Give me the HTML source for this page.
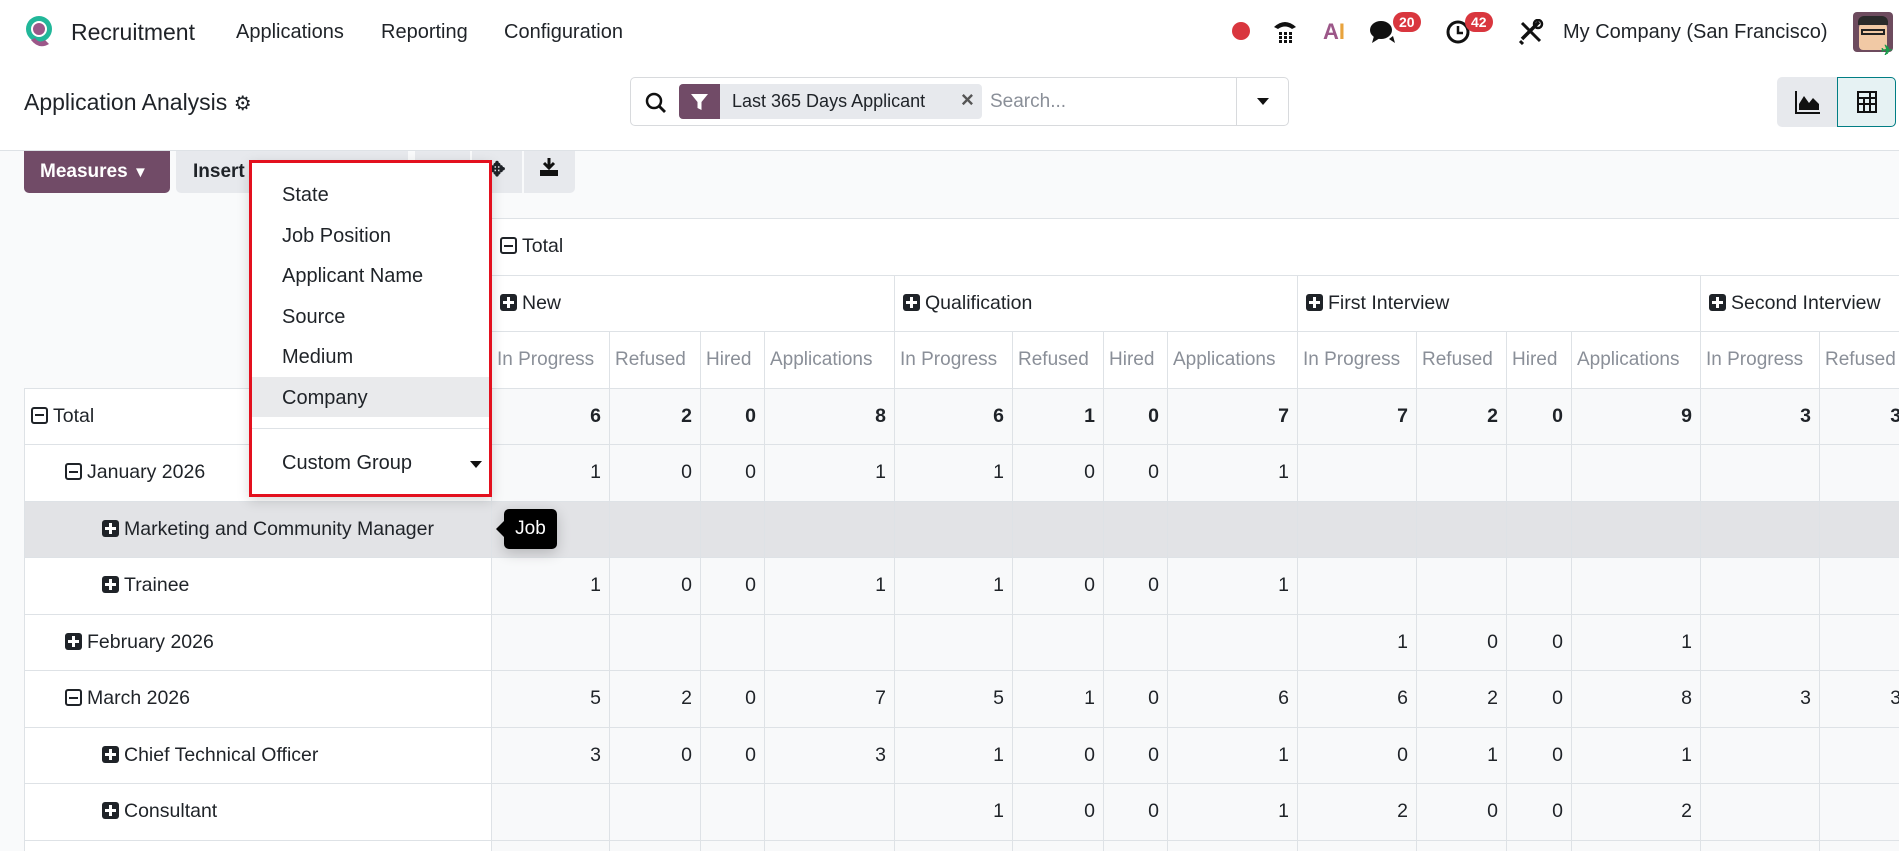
<!DOCTYPE html>
<html style="width:1899px;height:851px;overflow:hidden"><head><meta charset="utf-8"><style>
*{box-sizing:border-box;margin:0;padding:0}
body{width:1899px;height:851px;overflow:hidden;background:#f9fafb;font-family:"Liberation Sans",sans-serif;color:#1f2328;position:relative}
.abs{position:absolute}
#nav{left:0;top:0;width:1899px;height:62px;background:#fff}
#cp{left:0;top:62px;width:1899px;height:89px;background:#fff;border-bottom:1px solid #dee2e6}
.navt{position:absolute;top:21px;font-size:20px;color:#1f2328}
.badge{position:absolute;background:#d9363e;color:#fff;font-size:14px;font-weight:bold;border-radius:10px;padding:2px 6px;line-height:16px}
table{border-collapse:collapse;table-layout:fixed;font-size:19.5px}
td{height:56.5px;border:1px solid #dee2e6;padding:0 8px;white-space:nowrap;overflow:hidden}
td.n{text-align:right;background:#f8f9fa}
td.m{color:#8a8f98;background:#fff;padding:0 5px;font-size:19px}
td.h{background:#fff}
td.l{background:#fff}
tr.hl td{background:#e2e3e6}
.pl,.mi{display:inline-block;width:17px;height:17px;border-radius:3px;vertical-align:-2px;margin-right:5px;position:relative}
.pl{background:#1f2328}
.pl:before{content:"";position:absolute;left:3px;top:7px;width:11px;height:3px;background:#fff}
.pl:after{content:"";position:absolute;left:7px;top:3px;width:3px;height:11px;background:#fff}
.mi{border:2px solid #1f2328}
.mi:before{content:"";position:absolute;left:2px;top:5.5px;width:9px;height:2px;background:#1f2328}
.dd{font-size:20px;position:absolute;left:30px}
</style></head><body>
<div id="nav" class="abs">
 <svg class="abs" style="left:23px;top:14px" width="32" height="36" viewBox="0 0 32 36"><circle cx="16" cy="15" r="13" fill="#21b799"/><circle cx="16" cy="15" r="8" fill="#fff"/><circle cx="16" cy="15" r="6" fill="#9c5789"/><path d="M8 26 Q16 36 26 30 L22 26 Q16 30 12 24Z" fill="#9c5789"/></svg>
 <div class="navt" style="left:71px;font-size:23px;top:19px">Recruitment</div>
 <div class="navt" style="left:236px">Applications</div>
 <div class="navt" style="left:381px">Reporting</div>
 <div class="navt" style="left:504px">Configuration</div>
 <div class="abs" style="left:1232px;top:22px;width:18px;height:18px;border-radius:50%;background:#d9363e"></div>
 <svg class="abs" style="left:1272px;top:17px" width="26" height="28" viewBox="0 0 26 28"><path d="M2 10 Q13 0 24 10 L20 12 Q13 7 6 12Z" fill="#111"/><g fill="#111"><rect x="7" y="15" width="3" height="3"/><rect x="12" y="15" width="3" height="3"/><rect x="17" y="15" width="3" height="3"/><rect x="7" y="19" width="3" height="3"/><rect x="12" y="19" width="3" height="3"/><rect x="17" y="19" width="3" height="3"/><rect x="7" y="23" width="3" height="3"/><rect x="12" y="23" width="3" height="3"/><rect x="17" y="23" width="3" height="3"/></g></svg>
 <div class="abs" style="left:1323px;top:19px;font-size:22px;font-weight:bold;color:#9c5789">A<span style="color:#e8a33d">I</span></div>
 <svg class="abs" style="left:1369px;top:19px" width="30" height="26" viewBox="0 0 30 26"><ellipse cx="12" cy="11" rx="11" ry="9" fill="#111"/><path d="M5 17 L3 24 L11 19Z" fill="#111"/><path d="M20 20 L26 24 L24 17Z" fill="#111"/></svg>
 <div class="badge" style="left:1393px;top:12px">20</div>
 <svg class="abs" style="left:1446px;top:19px" width="26" height="26" viewBox="0 0 26 26"><circle cx="12" cy="13" r="10" fill="none" stroke="#111" stroke-width="3"/><path d="M12 7v7h5" stroke="#111" stroke-width="2.5" fill="none"/></svg>
 <div class="badge" style="left:1465px;top:12px">42</div>
 <svg class="abs" style="left:1518px;top:19px" width="26" height="26" viewBox="0 0 26 26"><path d="M4 4 L22 22" stroke="#111" stroke-width="3"/><path d="M21 3 L4 20" stroke="#111" stroke-width="3.5"/><circle cx="20" cy="5" r="4" fill="none" stroke="#111" stroke-width="2.5"/><path d="M2 22 L5 25" stroke="#111" stroke-width="3"/></svg>
 <div class="navt" style="left:1563px">My Company (San Francisco)</div>
 <div class="abs" style="left:1853px;top:12px;width:40px;height:40px;border-radius:4px;background:#6d4b5e"><div style="position:absolute;left:6px;top:8px;width:28px;height:30px;background:#f1c9a5;border-radius:8px 8px 4px 4px"></div><div style="position:absolute;left:5px;top:4px;width:30px;height:9px;background:#2a2a2a;border-radius:6px 6px 0 0"></div><div style="position:absolute;left:8px;top:17px;width:24px;height:6px;border:2px solid #222"></div><div style="position:absolute;left:28px;top:30px;color:#1a9a4a;font-size:14px;font-weight:bold">✈</div></div>
</div>
<div id="cp" class="abs">
 <div class="abs" style="left:24px;top:27px;font-size:23px">Application Analysis <span style="font-size:20px">⚙</span></div>
 <div class="abs" style="left:630px;top:15px;width:659px;height:49px;border:1px solid #d8dadd;border-radius:5px;background:#fff">
  <svg class="abs" style="left:14px;top:14px" width="22" height="22" viewBox="0 0 22 22"><circle cx="9" cy="9" r="7" fill="none" stroke="#111" stroke-width="2.5"/><path d="M14 14l6 6" stroke="#111" stroke-width="2.8"/></svg>
  <div class="abs" style="left:48px;top:6px;width:303px;height:35px;background:#e7e9ed;border-radius:4px"></div>
  <div class="abs" style="left:48px;top:6px;width:41px;height:35px;background:#714b67;border-radius:4px 0 0 4px"><svg style="position:absolute;left:11px;top:9px" width="19" height="18" viewBox="0 0 19 18"><path d="M1 1h17l-6.5 8v8l-4-2V9Z" fill="#fff"/></svg></div>
  <div class="abs" style="left:101px;top:13px;font-size:18px">Last 365 Days Applicant</div>
  <div class="abs" style="left:330px;top:9px;font-size:22px;color:#555;font-weight:bold">×</div>
  <div class="abs" style="left:359px;top:13px;font-size:19px;color:#8a8f98">Search...</div>
  <div class="abs" style="left:605px;top:0;width:1px;height:47px;background:#d8dadd"></div>
  <div class="abs" style="left:626px;top:20px;width:0;height:0;border-left:6px solid transparent;border-right:6px solid transparent;border-top:7px solid #111"></div>
 </div>
 <div class="abs" style="left:1777px;top:15px;width:119px;height:50px;border-radius:5px;background:#e7e9ed"></div>
 <div class="abs" style="left:1837px;top:15px;width:59px;height:50px;border:1px solid #017e84;border-radius:0 5px 5px 0;background:#e6f2f3"></div>
 <svg class="abs" style="left:1795px;top:28px" width="26" height="24" viewBox="0 0 26 24"><path d="M1 1v22h24" stroke="#111" stroke-width="2" fill="none"/><path d="M4 20 L4 14 L9 6 L14 13 L18 8 L24 14 L24 20Z" fill="#111"/></svg>
 <svg class="abs" style="left:1856px;top:28px" width="22" height="24" viewBox="0 0 22 24"><g fill="none" stroke="#111" stroke-width="2"><rect x="2" y="2" width="18" height="20"/><path d="M2 8h18M2 14h18M8 8v14M14 2v20"/></g></svg>
</div>
<div class="abs" style="left:24px;top:151px;width:146px;height:42px;background:#714b67;border-radius:0 0 5px 5px;color:#fff;font-size:19px;font-weight:bold;padding:10px 0 0 16px">Measures <span style="font-size:15px">▼</span></div>
<div class="abs" style="left:176px;top:151px;width:232px;height:42px;background:#e7e9ed;border-radius:0 0 5px 5px;font-size:19px;font-weight:bold;padding:10px 0 0 17px">Insert</div>
<div class="abs" style="left:415px;top:151px;width:55px;height:42px;background:#e7e9ed"></div>
<div class="abs" style="left:472px;top:151px;width:50px;height:42px;background:#e7e9ed;font-size:20px;font-weight:bold;text-align:center;padding-top:6px">✥</div>
<div class="abs" style="left:524px;top:151px;width:51px;height:42px;background:#e7e9ed;border-radius:0 0 5px 0"><svg style="position:absolute;left:15px;top:6px" width="20" height="20" viewBox="0 0 20 20"><path d="M10 1v9M5 6l5 5 5-5" stroke="#111" stroke-width="3" fill="none"/><rect x="1" y="13" width="18" height="6" fill="#111"/></svg></div>

<div class="abs" style="left:24px;top:218px;width:1875px;height:633px;overflow:hidden">
<table style="width:1885px">
<colgroup><col style="width:467px"><col style="width:118px"><col style="width:91px"><col style="width:64px"><col style="width:130px"><col style="width:118px"><col style="width:91px"><col style="width:64px"><col style="width:130px"><col style="width:119px"><col style="width:90px"><col style="width:65px"><col style="width:129px"><col style="width:119px"><col style="width:90px"></colgroup>
<tr><td rowspan="3" style="border:none;border-right:1px solid #dee2e6;background:#f9fafb"></td><td class="h" colspan="14"><span class="mi"></span>Total</td></tr>
<tr><td class="h" colspan="4"><span class="pl"></span>New</td><td class="h" colspan="4"><span class="pl"></span>Qualification</td><td class="h" colspan="4"><span class="pl"></span>First Interview</td><td class="h" colspan="2"><span class="pl"></span>Second Interview</td></tr>
<tr><td class="m">In Progress</td><td class="m">Refused</td><td class="m">Hired</td><td class="m">Applications</td><td class="m">In Progress</td><td class="m">Refused</td><td class="m">Hired</td><td class="m">Applications</td><td class="m">In Progress</td><td class="m">Refused</td><td class="m">Hired</td><td class="m">Applications</td><td class="m">In Progress</td><td class="m">Refused</td></tr>
<tr style="font-weight:bold"><td class="l" style="font-weight:normal;padding-left:6px"><span class="mi"></span>Total</td><td class="n">6</td><td class="n">2</td><td class="n">0</td><td class="n">8</td><td class="n">6</td><td class="n">1</td><td class="n">0</td><td class="n">7</td><td class="n">7</td><td class="n">2</td><td class="n">0</td><td class="n">9</td><td class="n">3</td><td class="n">3</td></tr>
<tr><td class="l" style="padding-left:40px"><span class="mi"></span>January 2026</td><td class="n">1</td><td class="n">0</td><td class="n">0</td><td class="n">1</td><td class="n">1</td><td class="n">0</td><td class="n">0</td><td class="n">1</td><td class="n"></td><td class="n"></td><td class="n"></td><td class="n"></td><td class="n"></td><td class="n"></td></tr>
<tr class="hl"><td class="l" style="padding-left:77px"><span class="pl"></span>Marketing and Community Manager</td><td class="n"></td><td class="n"></td><td class="n"></td><td class="n"></td><td class="n"></td><td class="n"></td><td class="n"></td><td class="n"></td><td class="n"></td><td class="n"></td><td class="n"></td><td class="n"></td><td class="n"></td><td class="n"></td></tr>
<tr><td class="l" style="padding-left:77px"><span class="pl"></span>Trainee</td><td class="n">1</td><td class="n">0</td><td class="n">0</td><td class="n">1</td><td class="n">1</td><td class="n">0</td><td class="n">0</td><td class="n">1</td><td class="n"></td><td class="n"></td><td class="n"></td><td class="n"></td><td class="n"></td><td class="n"></td></tr>
<tr><td class="l" style="padding-left:40px"><span class="pl"></span>February 2026</td><td class="n"></td><td class="n"></td><td class="n"></td><td class="n"></td><td class="n"></td><td class="n"></td><td class="n"></td><td class="n"></td><td class="n">1</td><td class="n">0</td><td class="n">0</td><td class="n">1</td><td class="n"></td><td class="n"></td></tr>
<tr><td class="l" style="padding-left:40px"><span class="mi"></span>March 2026</td><td class="n">5</td><td class="n">2</td><td class="n">0</td><td class="n">7</td><td class="n">5</td><td class="n">1</td><td class="n">0</td><td class="n">6</td><td class="n">6</td><td class="n">2</td><td class="n">0</td><td class="n">8</td><td class="n">3</td><td class="n">3</td></tr>
<tr><td class="l" style="padding-left:77px"><span class="pl"></span>Chief Technical Officer</td><td class="n">3</td><td class="n">0</td><td class="n">0</td><td class="n">3</td><td class="n">1</td><td class="n">0</td><td class="n">0</td><td class="n">1</td><td class="n">0</td><td class="n">1</td><td class="n">0</td><td class="n">1</td><td class="n"></td><td class="n"></td></tr>
<tr><td class="l" style="padding-left:77px"><span class="pl"></span>Consultant</td><td class="n"></td><td class="n"></td><td class="n"></td><td class="n"></td><td class="n">1</td><td class="n">0</td><td class="n">0</td><td class="n">1</td><td class="n">2</td><td class="n">0</td><td class="n">0</td><td class="n">2</td><td class="n"></td><td class="n"></td></tr>
<tr><td class="l"></td><td class="n"></td><td class="n"></td><td class="n"></td><td class="n"></td><td class="n"></td><td class="n"></td><td class="n"></td><td class="n"></td><td class="n"></td><td class="n"></td><td class="n"></td><td class="n"></td><td class="n"></td><td class="n"></td></tr>
</table></div>

<div class="abs" style="left:249px;top:160px;width:243px;height:337px;border:3px solid #e3101e;background:#fff;box-shadow:0 4px 12px rgba(0,0,0,.15)">
 <div class="dd" style="top:21px">State</div>
 <div class="dd" style="top:62px">Job Position</div>
 <div class="dd" style="top:102px">Applicant Name</div>
 <div class="dd" style="top:143px">Source</div>
 <div class="abs" style="left:0;top:214px;width:237px;height:40px;background:#e9eaec"></div>
 <div class="dd" style="top:183px">Medium</div>
 <div class="dd" style="top:224px">Company</div>
 <div class="abs" style="left:0;top:265px;width:237px;height:1px;background:#dee2e6"></div>
 <div class="dd" style="top:289px">Custom Group</div>
 <div class="abs" style="left:218px;top:298px;border-left:6px solid transparent;border-right:6px solid transparent;border-top:7px solid #111"></div>
</div>
<div class="abs" style="left:504px;top:509px;width:53px;height:40px;background:#000;border-radius:5px;color:#fff;font-size:19px;text-align:center;padding-top:9px;box-shadow:0 4px 14px rgba(0,0,0,.2)">Job</div>
<div class="abs" style="left:496px;top:521px;border-top:8px solid transparent;border-bottom:8px solid transparent;border-right:8px solid #000"></div>
</body></html>
